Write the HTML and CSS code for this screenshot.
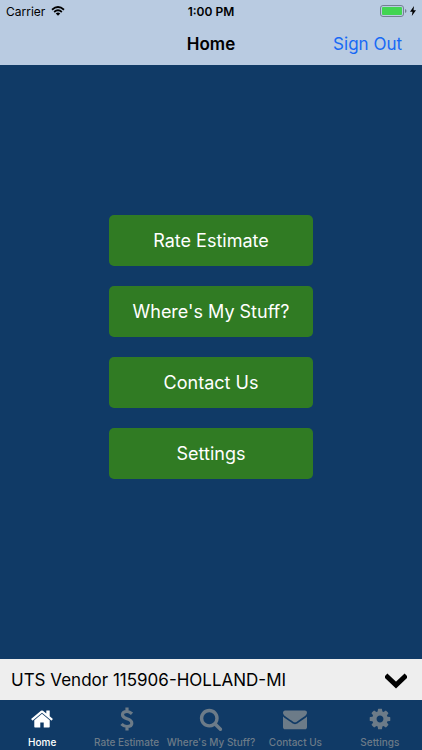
FILE: index.html
```
<!DOCTYPE html>
<html lang="en">
<head>
    <meta charset="utf-8">
    <meta name="viewport" content="width=device-width, initial-scale=1">
    <title>Home</title>
    <link rel="stylesheet" href="styles.css">
</head>
<body>
    <header class="header">
        <div class="status-bar">
            <div class="carrier">
                <span>Carrier</span>
                <svg class="wifi" viewBox="0 0 28 20">
                    <path d="M2 7.500Q14-3.500 26 7.500M6.300 12Q14 5 21.700 12" fill="none" stroke="currentColor" stroke-width="3.400"/>
                    <path d="M9.500 15Q14 11 18.500 15L14 19.500z" fill="currentColor"/>
                </svg>
            </div>
            <span class="time">1:00 PM</span>
            <div class="battery">
                <svg class="battery-icon" viewBox="0 0 27 12">
                    <rect x="0.500" y="0.500" width="23" height="11" rx="2.500" fill="none" stroke="#748093"/>
                    <rect x="2" y="2" width="20" height="8" rx="1" fill="#42d552"/>
                    <path d="M25 4q1.500 0.500 1.500 2t-1.500 2z" fill="#748093"/>
                </svg>
                <svg class="bolt" viewBox="0 0 6 10">
                    <path d="M4 0L0 5.700h2.500L1.800 10L6 4.200H3.500z" fill="currentColor"/>
                </svg>
            </div>
        </div>
        <div class="nav-bar">
            <h1 class="title">Home</h1>
            <button class="sign-out" type="button">Sign Out</button>
        </div>
    </header>

    <main class="content">
        <button class="menu-button" type="button">Rate Estimate</button>
        <button class="menu-button" type="button">Where's My Stuff?</button>
        <button class="menu-button" type="button">Contact Us</button>
        <button class="menu-button" type="button">Settings</button>
    </main>

    <div class="vendor">
        <select class="vendor-select" aria-label="Vendor">
            <option>UTS Vendor 115906-HOLLAND-MI</option>
        </select>
        <svg class="chevron" viewBox="0 0 22 16">
            <path d="M2.500 4L11 12L19.500 4" fill="none" stroke="currentColor" stroke-width="5" stroke-linecap="square"/>
        </svg>
    </div>

    <nav class="tabs">
        <a class="tab active" href="#home">
            <svg class="tab-icon" viewBox="0 0 1792 1792"><path d="M1472 992v480q0 26-19 45t-45 19h-384v-384h-256v384h-384q-26 0-45-19t-19-45v-480q0-1 .5-3t.5-3l575-474 575 474q1 2 1 6zm223-69l-62 74q-8 9-21 11h-3q-13 0-21-7l-692-577-692 577q-12 8-24 7-13-2-21-11l-62-74q-8-10-7-23.500t11-21.500l719-599q32-26 76-26t76 26l244 204v-195q0-14 9-23t23-9h192q14 0 23 9t9 23v408l219 182q10 8 11 21.500t-7 23.500z"/></svg>
            <span>Home</span>
        </a>
        <a class="tab" href="#rate">
            <svg class="tab-icon" viewBox="0 0 24 24"><path d="M12 0.500V4M12 20V23.500M17 6.800Q14.500 4.500 12 4.500Q7.500 4.500 7.500 7.800Q7.500 10.300 12 11.700Q16.800 13.200 16.800 16.200Q16.800 19.500 12 19.500Q8.800 19.500 6.500 17" fill="none" stroke="currentColor" stroke-width="3.200"/></svg>
            <span>Rate Estimate</span>
        </a>
        <a class="tab" href="#stuff">
            <svg class="tab-icon" viewBox="0 0 1792 1792"><path d="M1216 832q0-185-131.500-316.500t-316.500-131.500-316.500 131.500-131.500 316.500 131.500 316.500 316.500 131.500 316.500-131.500 131.500-316.500zm512 832q0 52-38 90t-90 38q-54 0-90-38l-343-342q-179 124-399 124-143 0-273.500-55.500t-225-150-150-225-55.500-273.500 55.500-273.500 150-225 225-150 273.500-55.500 273.500 55.500 225 150 150 225 55.500 273.500q0 220-124 399l343 343q37 37 37 90z"/></svg>
            <span>Where's My Stuff?</span>
        </a>
        <a class="tab" href="#contact">
            <svg class="tab-icon" viewBox="0 0 1792 1792"><path d="M1792 710v794q0 66-47 113t-113 47h-1472q-66 0-113-47t-47-113v-794q44 49 101 87 362 246 497 345 57 42 92.500 65.500t94.500 48 110 24.500h2q51 0 110-24.500t94.500-48 92.500-65.500q170-123 498-345 57-39 100-87zm0-294q0 79-49 151t-122 123q-376 261-468 325-10 7-42.500 31t-54 38.500-52 32.500-57.500 27-50 9h-2q-23 0-50-9t-57.500-27-52-32.500-54-38.500-42.500-31q-91-64-262-182.500t-205-142.500q-62-42-117-115.500t-55-136.500q0-78 41.500-130t118.500-52h1472q65 0 112.500 47t47.500 113z"/></svg>
            <span>Contact Us</span>
        </a>
        <a class="tab" href="#settings">
            <svg class="tab-icon" viewBox="0 0 1792 1792"><path d="M1152 896q0-106-75-181t-181-75-181 75-75 181 75 181 181 75 181-75 75-181zm512-109v222q0 12-8 23t-20 13l-185 28q-19 54-39 91 35 50 107 138 10 12 10 25t-9 23q-27 37-99 108t-94 71q-12 0-26-9l-138-108q-44 23-91 38-16 136-29 186-7 28-36 28h-222q-14 0-24.500-8.500t-11.500-21.500l-28-184q-49-16-90-37l-141 107q-10 9-25 9-14 0-25-11-126-114-165-168-7-10-7-23 0-12 8-23 15-21 51-66.500t54-70.500q-27-50-41-99l-183-27q-13-2-21-12.500t-8-23.500v-222q0-12 8-23t19-13l186-28q14-46 39-92-40-57-107-138-10-12-10-24 0-10 9-23 26-36 98.500-107.500t94.500-71.500q13 0 26 10l138 107q44-23 91-38 16-136 29-186 7-28 36-28h222q14 0 24.500 8.500t11.500 21.500l28 184q49 16 90 37l142-107q9-9 24-9 13 0 25 10 129 119 165 170 7 8 7 22 0 12-8 23-15 21-51 66.500t-54 70.500q26 50 41 98l183 28q13 2 21 12.500t8 23.500z"/></svg>
            <span>Settings</span>
        </a>
    </nav>
</body>
</html>
```
FILE: styles.css
```
* {
    box-sizing: border-box;
}
body {
    margin: 0;
    min-height: 100vh;
    display: flex;
    flex-direction: column;
    font-family: Inter, "Liberation Sans", sans-serif;
    background: #103a66;
    color: #000;
}
button,
select {
    font-family: inherit;
    border: none;
    margin: 0;
}
.header {
    background: #b9cbe1;
}
.status-bar,
.nav-bar {
    display: grid;
    grid-template-columns: 1fr auto 1fr;
    align-items: center;
}
.status-bar {
    height: 22px;
    padding: 0 6px;
    font-size: 12px;
}
.carrier {
    display: flex;
    align-items: center;
    gap: 6px;
}
.wifi {
    width: 14px;
    height: 10px;
}
.time {
    font-weight: 600;
}
.battery {
    display: flex;
    align-items: center;
    justify-content: flex-end;
    gap: 3px;
}
.battery-icon {
    width: 27px;
    height: 12px;
}
.bolt {
    width: 6px;
    height: 10px;
}
.nav-bar {
    height: 43px;
    padding: 0 20px;
}
.title {
    grid-column: 2;
    margin: 0;
    font-size: 17px;
    font-weight: 600;
}
.sign-out {
    justify-self: end;
    padding: 0;
    background: none;
    color: #1769f5;
    font-size: 17px;
}
.content {
    flex: 1;
    display: flex;
    flex-direction: column;
    align-items: center;
    justify-content: center;
    gap: 20px;
    padding: 20px 0 50px;
}
.menu-button {
    width: 48%;
    min-width: 204px;
    height: 51px;
    border-radius: 5px;
    background: #307b23;
    color: #fff;
    font-size: 18px;
}
.vendor {
    position: relative;
    height: 41px;
    background: #eee;
}
.vendor-select {
    width: 100%;
    height: 100%;
    padding: 0 48px 0 11px;
    appearance: none;
    background: none;
    color: #000;
    font-size: 17px;
}
/* sits over the select so the whole bar stays clickable */
.chevron {
    position: absolute;
    top: 14px;
    right: 15px;
    width: 22px;
    height: 16px;
    pointer-events: none;
}
.tabs {
    display: flex;
    height: 50px;
    padding-top: 7px;
}
.tab {
    flex: 1 1 0;
    min-width: 0;
    display: flex;
    flex-direction: column;
    align-items: center;
    gap: 4px;
    color: #6c7b88;
    font-size: 10px;
    font-weight: 500;
    line-height: 14px;
    text-decoration: none;
    white-space: nowrap;
}
.tab.active {
    color: #fff;
}
.tab-icon {
    width: 24px;
    height: 24px;
    fill: currentColor;
}
```
